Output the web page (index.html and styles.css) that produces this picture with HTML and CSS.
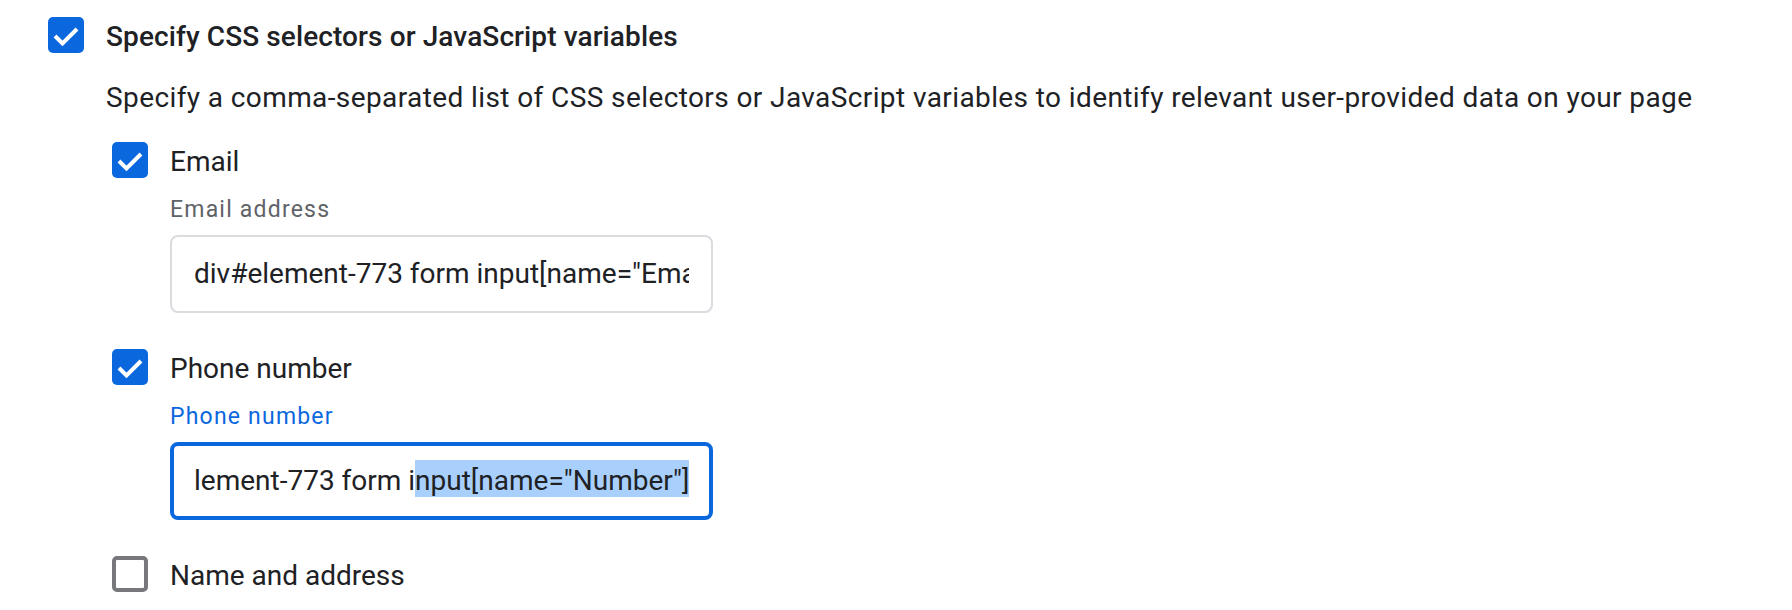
FILE: index.html
```html
<!DOCTYPE html>
<html lang="en">
<head>
<meta charset="utf-8">
<title>Specify CSS selectors</title>
<link rel="stylesheet" href="styles.css">
</head>
<body>
<div class="page">
  <div class="option option-main">
    <span class="box checked">
      <svg viewBox="0 0 36 36" width="36" height="36"><path d="M7 19 L14.5 26.5 L29 12" fill="none" stroke="#fff" stroke-width="4"/></svg>
    </span>
    <span class="title">Specify CSS selectors or JavaScript variables</span>
  </div>
  <div class="group">
    <p class="desc">Specify a comma-separated list of CSS selectors or JavaScript variables to identify relevant user-provided data on your page</p>

    <div class="option">
      <span class="box checked">
        <svg viewBox="0 0 36 36" width="36" height="36"><path d="M7 19 L14.5 26.5 L29 12" fill="none" stroke="#fff" stroke-width="4"/></svg>
      </span>
      <span class="label">Email</span>
    </div>
    <div class="field">
      <div class="field-label">Email address</div>
      <div class="input">
        <div class="input-text">div#element-773 form input[name="Email"]</div>
      </div>
    </div>

    <div class="option option-next">
      <span class="box checked">
        <svg viewBox="0 0 36 36" width="36" height="36"><path d="M7 19 L14.5 26.5 L29 12" fill="none" stroke="#fff" stroke-width="4"/></svg>
      </span>
      <span class="label">Phone number</span>
    </div>
    <div class="field">
      <div class="field-label focused">Phone number</div>
      <div class="input focused">
        <div class="input-text">lement-773 form i<span class="sel">nput[name="Number"]</span></div>
      </div>
    </div>

    <div class="option option-next">
      <span class="box"></span>
      <span class="label">Name and address</span>
    </div>
  </div>
</div>
</body>
</html>
```

FILE: styles.css
```css
html, body {
  margin: 0;
  padding: 0;
  background: #ffffff;
}

body {
  font-family: Roboto, "Liberation Sans", Arial, sans-serif;
  color: #202124;
}

.page {
  padding: 17px 0 0 48px;
}

.option {
  display: flex;
  align-items: center;
  gap: 22px;
  height: 36px;
}

.box {
  box-sizing: border-box;
  width: 36px;
  height: 36px;
  border-radius: 5px;
  border: 4px solid #76787b;
  flex: none;
  display: flex;
  align-items: center;
  justify-content: center;
}

.box.checked {
  background: #0b67de;
  border: none;
}

.box svg {
  display: block;
}

.title {
  font-size: 28px;
  font-weight: 500;
  line-height: 36px;
  letter-spacing: 0.1px;
  padding-top: 4px;
}

.label {
  font-size: 28px;
  line-height: 36px;
  padding-top: 4px;
}

.group {
  padding-left: 64px;
}

.desc {
  margin: 27px 0 26px -6px;
  font-size: 28px;
  line-height: 36px;
  letter-spacing: 0.4px;
}

.option-next {
  margin-top: 36px;
}

.field {
  padding-left: 58px;
}

.field-label {
  margin-top: 20px;
  font-size: 23px;
  line-height: 24px;
  letter-spacing: 1.2px;
  color: #5f6368;
}

.field-label.focused {
  color: #0b67de;
}

.input {
  box-sizing: border-box;
  width: 543px;
  height: 78px;
  margin-top: 13px;
  border: 2px solid #dadce0;
  border-radius: 8px;
  padding: 0 22px;
  display: flex;
  align-items: center;
}

.input.focused {
  margin-top: 13px;
  border: 4px solid #0b67de;
  padding: 0 20px;
}

.input-text {
  flex: 1;
  overflow: hidden;
  white-space: nowrap;
  font-size: 28px;
  line-height: 42px;
  color: #202124;
}

.sel {
  background: #a9d0fd;
  padding-top: 8px;
}
```
